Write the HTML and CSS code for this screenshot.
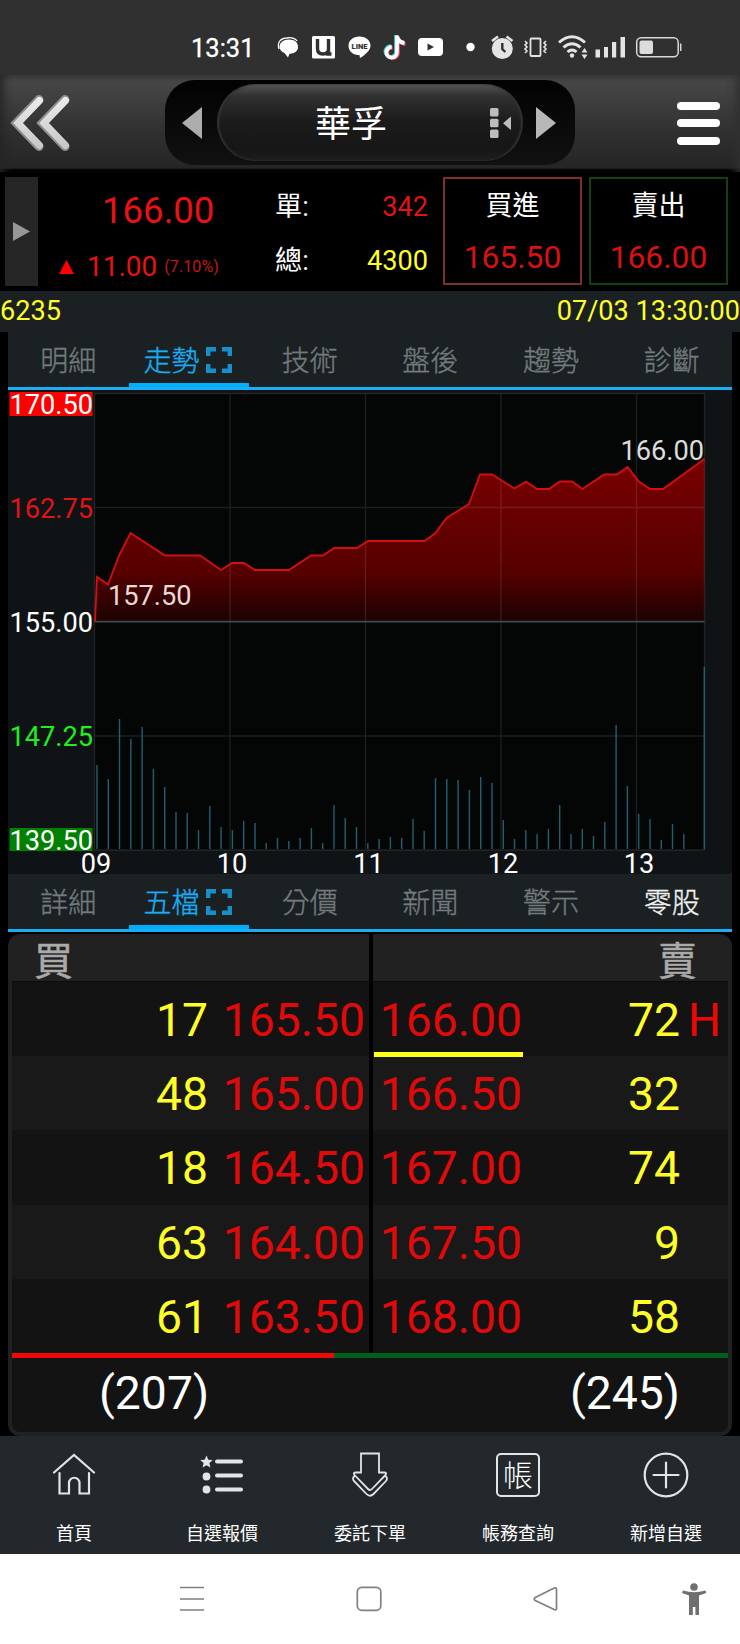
FILE: index.html
```
<!DOCTYPE html>
<html lang="zh-Hant">
<head>
  <meta charset="UTF-8" />
  <meta name="viewport" content="width=device-width, initial-scale=1" />
  <title>華孚 6235</title>
  <link rel="stylesheet" href="styles.css">
</head>
<body>
  <div class="status-bar">
    <span class="clock">13:31</span>
    <svg class="status-icons" viewBox="270 25 420 44" width="420" height="44">
      <path d="M279 49c-2-6 1-11 8-11 5-1 9 1 10 3" fill="none" stroke="#fff" stroke-width="1.300"/>
      <path d="M289 39.500c6 0 9 3 9 7.500 0 4-3 6.500-8.500 6.800L288 57.500l-3.500-4.500c-3-1-5-3.500-5-6 0-4.500 4-7.500 9.500-7.500z" fill="#fff"/>
      <rect x="312" y="36" width="23" height="22.500" rx="1.500" fill="#fff"/>
      <path d="M317.500 39v9.500q0 5.500 5.500 5.500 3 0 4.500-2v2h4M328.500 39v14" fill="none" stroke="#303030" stroke-width="3.400"/>
      <path d="M359.500 36.500c6.500 0 11 4 11 9.200 0 5-6 9.300-10 12-.8.500-.8-.5-.8-2.500-6.500 0-11.200-4-11.200-9.500 0-5.200 4.500-9.200 11-9.200z" fill="#fff"/>
      <text x="359.500" y="49" class="line-mark">LINE</text>
      <g fill="none" stroke-width="3.800">
        <path d="M396 35v16.500a5.300 5.300 0 1 1-5.300-5.300M396 36q1.500 6 7.500 6.500" stroke="#25d7cf"/>
        <path d="M398 36.500V53a5.300 5.300 0 1 1-5.300-5.300M398 37.500q1.500 6 7.500 6.500" stroke="#f5365c"/>
        <path d="M397 35.500v16.800a5.300 5.300 0 1 1-5.300-5.300M397 36.500q1.500 6 7.500 6.500" stroke="#fff"/>
      </g>
      <rect x="418" y="38" width="25" height="18" rx="4" fill="#fff"/>
      <path d="M427.500 43.500v7l6.500-3.500z" fill="#303030"/>
      <circle cx="470.500" cy="47" r="4.200" fill="#fff"/>
      <circle cx="502.300" cy="48.500" r="10.500" fill="#e4e4e4"/>
      <path d="M502.300 43v6l3 3" fill="none" stroke="#303030" stroke-width="2.400"/>
      <path d="M492 41l6-4.500M512.500 41l-6-4.500" stroke="#e4e4e4" stroke-width="2.500"/>
      <rect x="530.500" y="38.500" width="10" height="17.500" rx="1" fill="none" stroke="#e4e4e4" stroke-width="1.800"/>
      <path d="M525 41l2 2-2 2 2 2-2 2 2 2-2 2M546 41l-2 2 2 2-2 2 2 2-2 2 2 2" fill="none" stroke="#e4e4e4" stroke-width="1.600"/>
      <g fill="none" stroke="#e4e4e4" stroke-width="3">
        <path d="M559 42.500q13-11.500 26 0"/>
        <path d="M563.500 47.500q8.500-7.500 17 0"/>
        <path d="M567.500 52q4.500-4 9 0"/>
      </g>
      <circle cx="572" cy="55.500" r="2.200" fill="#e4e4e4"/>
      <path d="M581.500 52.500l3-4.500 3 4.500zM581.500 54.500l3 4.500 3-4.500z" fill="#e4e4e4"/>
      <path d="M595.500 49.500h4.500v8h-4.500zM604 47h4v10.500h-4zM612 42h4.200v15.500H612zM620.500 37h4.500v20.500h-4.500z" fill="#e4e4e4"/>
      <rect x="636.700" y="37.700" width="41.500" height="19" rx="4.500" fill="none" stroke="#d8d8d8" stroke-width="1.500"/>
      <rect x="639.500" y="40.500" width="13.500" height="13.500" rx="2" fill="#dcdcdc"/>
      <path d="M680.700 43.500v7.500" stroke="#d8d8d8" stroke-width="1.500"/>
    </svg>
  </div>

  <header class="topbar">
    <svg class="back" width="62" height="60" viewBox="0 0 62 60">
      <defs>
        <linearGradient id="chev" x1="0" y1="0" x2="0" y2="60" gradientUnits="userSpaceOnUse">
          <stop offset="0" stop-color="#f0f0f0"/>
          <stop offset="1" stop-color="#c4c4c4"/>
        </linearGradient>
      </defs>
      <path d="M29 7.500L6.500 31l22.500 23.500M55 7.500L32.500 31L55 54.500" fill="none" stroke="#8e8e8e" stroke-width="9" stroke-linecap="round"/>
      <path d="M29.500 8.500L8 31l21.500 22.500M55.500 8.500L34 31l21.500 22.500" fill="none" stroke="url(#chev)" stroke-width="7" stroke-linecap="round"/>
    </svg>
    <div class="switcher">
      <svg width="20" height="32" viewBox="0 0 20 32"><path d="M20 0v32L0 16z" fill="#adadad"/></svg>
      <div class="stock-name">
        <span>華孚</span>
        <svg class="list-icon" width="22" height="30" viewBox="0 0 22 30">
          <rect width="8.500" height="8.500" rx="1.500" y="0"/>
          <rect width="8.500" height="8.500" rx="1.500" y="10.700"/>
          <rect width="8.500" height="8.500" rx="1.500" y="21.500"/>
          <path d="M21 8.500v13.500l-8-6.800z"/>
        </svg>
      </div>
      <svg width="20" height="32" viewBox="0 0 20 32"><path d="M0 0v32l20-16z" fill="#b8b8b8"/></svg>
    </div>
    <div class="menu"><i></i><i></i><i></i></div>
  </header>

  <section class="quote">
    <div class="expand"><svg width="17" height="19" viewBox="0 0 17 19"><path d="M0 0v19l17-9.500z" fill="#979797"/></svg></div>
    <div class="price">
      <div class="last">166.00</div>
      <div class="change">
        <svg width="15" height="14" viewBox="0 0 15 14"><path d="M7.500 0L15 14H0z" fill="#f00"/></svg>
        <span>11.00</span>
        <small>(7.10%)</small>
      </div>
    </div>
    <div class="volume">
      <div><span>單:</span><b class="red">342</b></div>
      <div><span>總:</span><b class="yellow">4300</b></div>
    </div>
    <div class="trade buy"><span>買進</span><b>165.50</b></div>
    <div class="trade sell"><span>賣出</span><b>166.00</b></div>
  </section>

  <div class="info"><span>6235</span><span>07/03 13:30:00</span></div>

  <main class="content">
    <nav class="tabs">
      <a>明細</a>
      <a class="active">走勢<svg width="26" height="26" viewBox="0 0 26 26"><path d="M2.200 9V2.200H10M16 2.200h7.800V9M23.800 17v6.800H16M10 23.800H2.200V17"/></svg></a>
      <a>技術</a>
      <a>盤後</a>
      <a>趨勢</a>
      <a>診斷</a>
    </nav>

    <svg class="chart" viewBox="8 390 724 484" width="724" height="484">
      <defs>
        <linearGradient id="area" x1="0" y1="459" x2="0" y2="621" gradientUnits="userSpaceOnUse">
          <stop offset="0" stop-color="#7a0000"/>
          <stop offset=".7" stop-color="#560000"/>
          <stop offset="1" stop-color="#1c0202"/>
        </linearGradient>
      </defs>
      <rect x="94.500" y="393.500" width="610" height="456.500" fill="#040606"/>
      <path class="area" d="M95 621.500L97 577l11 7.500 11-29 11.500-22.500 34.500 22.500h35l21 14.500 11-7h12l11 7h34l22-14.500h12l11-7.500h23l11-7h56.500l10.500-7.500 11.500-15.500 22.500-14 11-29.500h12l22.500 14 11.500-7 11 7.500h12l11-7.500h12l10.500 7.500 21.500-14.500h13l10.500-7.500 11.500 14.500 11 7.500h13l41.500-30v162.500z"/>
      <path class="grid" d="M94.500 393.500h610V850h-610zM94.500 507.500h610M94.500 736h610M230 393.500V850M365.500 393.500V850M501 393.500V850M636.500 393.500V850"/>
      <path class="base" d="M94.500 621.700h610"/>
      <path class="trend" d="M95 621.500L97 577l11 7.500 11-29 11.500-22.500 34.500 22.500h35l21 14.500 11-7h12l11 7h34l22-14.500h12l11-7.500h23l11-7h56.500l10.500-7.500 11.500-15.500 22.500-14 11-29.500h12l22.500 14 11.500-7 11 7.500h12l11-7.500h12l10.500 7.500 21.500-14.500h13l10.500-7.500 11.500 14.500 11 7.500h13l41.500-30"/>
      <path class="bars" d="M97 849V765M108.300 849V779M119.500 849V719M130.800 849V739M142.100 849V727M153.400 849V769M164.700 849V787M176 849V812M187.200 849V813M198.500 849V830M209.800 849V806M221.100 849V827M232.400 849V830M243.700 849V821M255 849V823M266.200 849V843M277.500 849V838M288.800 849V841M300.100 849V838M311.400 849V828M322.700 849V843M334 849V805M345.200 849V818M356.500 849V827M367.800 849V843M379.100 849V839M390.400 849V837M401.700 849V838M413 849V819M424.200 849V831M435.500 849V778M446.800 849V779M458.100 849V780M469.400 849V790M480.700 849V777M492 849V783M503.300 849V820M514.500 849V839M525.800 849V830M537.100 849V834M548.400 849V829M559.700 849V805M571 849V834M582.300 849V829M593.500 849V836M604.800 849V822M616.100 849V725M627.400 849V786M638.700 849V814M650 849V819M661.300 849V840M672.500 849V824M683.800 849V834M704.300 849V667"/>
      <rect x="9.500" y="392" width="83" height="24" fill="#f00"/>
      <rect x="9.500" y="828" width="83" height="23" fill="#008100"/>
      <g class="axis-y">
        <text x="93" y="414">170.50</text>
        <text x="93" y="518" fill="#e11414">162.75</text>
        <text x="93" y="631.500">155.00</text>
        <text x="93" y="746" fill="#1df01d">147.25</text>
        <text x="93" y="850">139.50</text>
        <text x="191.500" y="605" fill="#e8d9d2">157.50</text>
        <text x="704" y="460" fill="#dcdcdc">166.00</text>
      </g>
      <g class="axis-x">
        <text x="96" y="873">09</text>
        <text x="232" y="873">10</text>
        <text x="368.500" y="873">11</text>
        <text x="503" y="873">12</text>
        <text x="639" y="873">13</text>
      </g>
    </svg>

    <nav class="tabs">
      <a>詳細</a>
      <a class="active">五檔<svg width="26" height="26" viewBox="0 0 26 26"><path d="M2.200 9V2.200H10M16 2.200h7.800V9M23.800 17v6.800H16M10 23.800H2.200V17"/></svg></a>
      <a>分價</a>
      <a>新聞</a>
      <a>警示</a>
      <a class="lit">零股</a>
    </nav>

    <section class="book">
      <div class="book-head"><span>買</span><span>賣</span></div>
      <div class="book-row"><b>17</b><em>165.50</em><em class="ask traded">166.00</em><b>72</b><i>H</i></div>
      <div class="book-row"><b>48</b><em>165.00</em><em class="ask">166.50</em><b>32</b></div>
      <div class="book-row"><b>18</b><em>164.50</em><em class="ask">167.00</em><b>74</b></div>
      <div class="book-row"><b>63</b><em>164.00</em><em class="ask">167.50</em><b>9</b></div>
      <div class="book-row"><b>61</b><em>163.50</em><em class="ask">168.00</em><b>58</b></div>
      <div class="ratio"><span style="width: 45%"></span></div>
      <div class="book-total"><span>(207)</span><span>(245)</span></div>
    </section>
  </main>

  <nav class="bottom-nav">
    <a>
      <svg width="46" height="46" viewBox="0 0 46 46"><path d="M3 20.500L23 3l20 17.500M8.500 21v20.500H18V31a5 5 0 0 1 10.500 0v10.500h9.500V21"/></svg>
      <span>首頁</span>
    </a>
    <a>
      <svg width="46" height="46" viewBox="0 0 46 46">
        <path class="solid" d="M7.500 3.500l1.800 4.200 4.500.4-3.400 3 1 4.400-3.900-2.300-3.900 2.300 1-4.400-3.400-3 4.500-.4z"/>
        <circle class="solid" cx="7.500" cy="24.500" r="3.900"/>
        <circle class="solid" cx="7.500" cy="37.500" r="3.900"/>
        <path class="thick" d="M18 9.500h24M18 23.500h24M18 37.500h24"/>
      </svg>
      <span>自選報價</span>
    </a>
    <a>
      <svg class="order-icon" width="46" height="46" viewBox="0 0 46 46">
        <path d="M14 1.500h18v19h5.500q3 .5.500 3L25 37q-2 2-4 0L8 23.500q-2.500-2.500.5-3H14z"/>
        <path d="M7.500 24q-3 2.500 0 5.500L19.500 42q3.500 3.500 7 0L38.500 29.500q3-3 0-5.500"/>
      </svg>
      <span>委託下單</span>
    </a>
    <a>
      <div class="account-icon">帳</div>
      <span>帳務查詢</span>
    </a>
    <a>
      <svg width="46" height="46" viewBox="0 0 46 46"><circle cx="23" cy="23" r="21.300"/><path d="M23 10.500v25M10.500 23h25"/></svg>
      <span>新增自選</span>
    </a>
  </nav>

  <div class="system-nav">
    <svg viewBox="0 1554 740 90" width="740" height="90">
      <g fill="none" stroke="#808080" stroke-width="1.700">
        <path d="M180 1587.500h24M180 1599h24M180 1610h24"/>
        <rect x="357.300" y="1587.300" width="23.500" height="23" rx="4.500"/>
        <path d="M556.500 1589.500v19q0 2-2.300 1l-19-9q-2-1.500 0-3l19-9.500q2.300-.8 2.300 1.500z"/>
      </g>
      <g fill="#6f6f6f">
        <circle cx="694" cy="1587" r="3.800"/>
        <path d="M683 1590.500q11 3.500 22.500 0l.8 2.600-7.300 2.400v19.500h-3.600v-8h-2.600v8h-3.800v-19.500l-7-2.400z"/>
      </g>
    </svg>
  </div>
</body>
</html>
```
FILE: styles.css
```
* {
  box-sizing: border-box;
}
body {
  margin: 0;
  width: 740px;
  background: #000;
  color: #fff;
  font-family: Roboto, 'Noto Sans CJK TC', sans-serif;
}
svg {
  display: block;
  flex: none;
}
b, em, i, small {
  font-weight: normal;
  font-style: normal;
}
.red { color: #e11414; }
.yellow { color: #ffff28; }

/* phone status bar */
.status-bar {
  display: flex;
  height: 75px;
  padding: 25px 0 0 191px;
  background: #303030;
}
.clock {
  width: 79px;
  font-size: 25.5px;
  line-height: 46px;
  -webkit-text-stroke: .3px;
}
.line-mark {
  font-size: 7.5px;
  font-weight: 900;
  text-anchor: middle;
  fill: #303030;
}

/* title bar */
.topbar {
  display: flex;
  align-items: center;
  justify-content: space-between;
  height: 97px;
  padding: 0 20px 3px 10px;
  background: linear-gradient(#3b3b3b, #464646 8%, #303030 60%, #252525 96%, #000 98%);
  box-shadow: inset 10px 0 8px -6px #262626, inset -10px 0 8px -6px #303030;
}
.switcher {
  display: flex;
  align-items: center;
  justify-content: space-between;
  width: 410px;
  height: 85px;
  margin-left: 93px;
  margin-right: 102px;
  padding: 1px 19px 0 17px;
  border-radius: 30px;
  background: linear-gradient(#020202, #111);
}
.stock-name {
  display: flex;
  align-items: center;
  justify-content: flex-end;
  width: 306px;
  height: 77px;
  margin-left: 2px;
  padding-right: 11px;
  border-radius: 39px;
  background: linear-gradient(#555, #303030 16%, #1b1b1b 50%, #161616 85%, #1e1e1e);
  box-shadow: inset 2px 0 2px #333, inset -2px 0 2px #333;
  font-size: 36px;
}
.stock-name span {
  margin-right: 103px;
  padding-top: 5px;
  line-height: 77px;
}
.list-icon {
  fill: #bdbdbd;
}
.menu {
  display: grid;
  gap: 9.5px;
  padding-top: 2px;
}
.menu i {
  width: 43px;
  height: 8px;
  border-radius: 4px;
  background: #fff;
}

/* quote summary */
.quote {
  display: flex;
  height: 119px;
  padding: 5px 12px 5px 5px;
}
.expand {
  display: flex;
  align-items: center;
  justify-content: center;
  width: 33px;
  background: #262626;
}
.price {
  width: 237px;
  padding-top: 10px;
  color: #e81212;
}
.last {
  padding-left: 64px;
  font-size: 36.6px;
  line-height: 48px;
}
.change {
  display: flex;
  align-items: center;
  padding: 8px 0 0 21px;
  font-size: 28px;
  line-height: 48px;
}
.change span {
  margin-left: 13px;
}
.change small {
  margin-left: 7px;
  font-size: 16.2px;
  color: #c01818;
}
.volume {
  width: 153px;
  padding-top: 3px;
  font-size: 27.2px;
  line-height: 54px;
}
.volume div {
  display: flex;
  justify-content: space-between;
}
.trade {
  width: 139px;
  height: 108px;
  margin-left: 15px;
  padding-top: 1px;
  border: 2px solid #7c3029;
  text-align: center;
  font-size: 27px;
}
.trade + .trade {
  margin-left: 7px;
}
.trade.sell {
  border-color: #163f12;
}
.trade span,
.trade b {
  display: block;
  line-height: 52px;
}
.trade b {
  color: #d91111;
  font-size: 31.8px;
  line-height: 50px;
}
.info {
  display: flex;
  justify-content: space-between;
  height: 41px;
  background: #1b2123;
  color: #ffff28;
  font-size: 27.1px;
  line-height: 41px;
}

/* tabs */
.content {
  padding: 0 8px;
}
.tabs {
  display: grid;
  grid-template-columns: repeat(6, 1fr);
  height: 58px;
  border-bottom: 3px solid #18aef5;
  background: #1b2123;
}
.tabs a {
  display: flex;
  justify-content: center;
  height: 55px;
  color: #747b7e;
  font-size: 28px;
  font-weight: 300;
  line-height: 59px;
  -webkit-text-stroke: .35px;
}
.tabs .active {
  padding-right: 3px;
  border-bottom: 4px solid #00aeff;
  color: #18aef5;
}
.tabs .active svg {
  margin: 15px 0 0 6px;
  fill: none;
  stroke: #168fcb;
  stroke-width: 4.4;
}
.tabs .lit {
  color: #f2f2f2;
}

/* intraday chart */
.chart {
  overflow: visible;
  background: #0f1316;
}
.area { fill: url(#area); }
.trend {
  fill: none;
  stroke: #d40f12;
  stroke-width: 1.8;
}
.grid {
  fill: none;
  stroke: #fff;
  stroke-opacity: .1;
  stroke-width: 1.4;
}
.base {
  stroke: #42484d;
  stroke-width: 1.8;
}
.bars {
  stroke: #245e72;
  stroke-width: 1.4;
}
.axis-y,
.axis-x {
  fill: #fff;
  font-size: 27.2px;
}
.axis-y { text-anchor: end; }
.axis-x { text-anchor: middle; }

/* best five orders */
.book {
  height: 502px;
  margin-top: 2px;
  border: 4px solid #212121;
  border-top: 0;
  border-radius: 12px;
  background: #131313;
  font-size: 46.3px;
}
.book-head {
  display: flex;
  justify-content: space-between;
  height: 48px;
  padding: 0 31px 0 22px;
  border-bottom: 1px solid #0b0b0b;
  border-radius: 9px 9px 0 0;
  background: linear-gradient(90deg, #212121 357px, #000 357px, #000 361px, #212121 361px);
  color: #aaa;
  font-size: 39px;
  line-height: 56px;
  -webkit-text-stroke: .5px;
}
.book-row {
  display: grid;
  grid-template-columns: 196px 163px 152px 157px 48px;
  height: 74.2px;
  background: linear-gradient(90deg, transparent 357px, #000 357px, #000 361px, transparent 361px);
  line-height: 77px;
  text-align: right;
}
.book-row:nth-child(odd) {
  background-color: #191919;
}
.book-row b { color: #ffff28; }
.book-row em {
  padding-right: 6px;
  color: #e00a0a;
}
.book-row .ask {
  margin-left: 3px;
  padding-right: 1px;
}
.book-row .traded {
  height: 75px;
  border-bottom: 5px solid #ffff1a;
}
.book-row i {
  padding-right: 7px;
  color: #f00606;
}
.ratio {
  height: 5px;
  background: #055f1c;
}
.ratio span {
  display: block;
  height: 5px;
  background: #f00808;
}
.book-total {
  display: flex;
  justify-content: space-between;
  padding: 0 48px 0 87px;
  line-height: 71px;
}

/* bottom menus */
.bottom-nav {
  display: grid;
  grid-template-columns: repeat(5, 1fr);
  height: 118px;
  background: #22282c;
}
.bottom-nav a {
  display: flex;
  flex-direction: column;
  align-items: center;
  padding-top: 16px;
  font-size: 18px;
  line-height: 28px;
}
.bottom-nav span {
  margin-top: 22px;
}
.bottom-nav svg {
  fill: none;
  stroke: #e2e5e6;
  stroke-width: 2.2;
  stroke-linecap: round;
}
.bottom-nav .solid {
  fill: #e2e5e6;
  stroke: none;
}
.bottom-nav .thick {
  stroke-width: 4;
}
.bottom-nav .order-icon {
  stroke-width: 1.8;
}
.account-icon {
  width: 44px;
  height: 44px;
  margin: 1px;
  border: 2px solid #e2e5e6;
  border-radius: 5px;
  font-size: 30px;
  font-weight: 300;
  line-height: 42px;
  text-align: center;
}
.system-nav {
  height: 90px;
  background: #fff;
}
```
